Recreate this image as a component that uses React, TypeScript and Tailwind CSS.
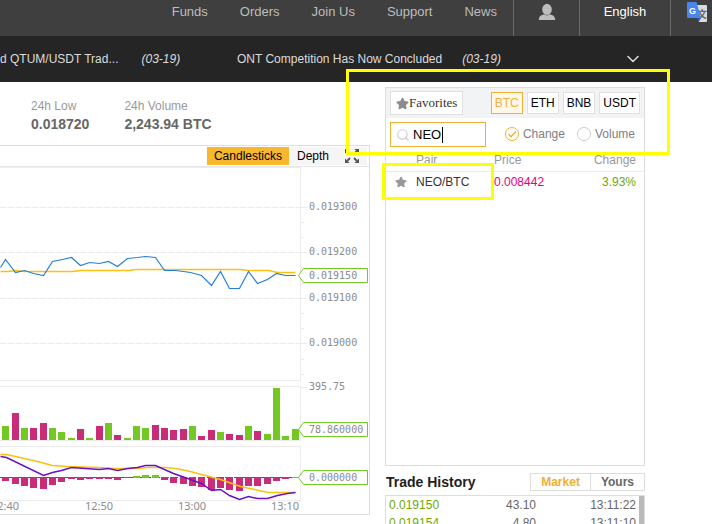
import React, { useState } from 'react';
import { ChevronDown, Search } from 'lucide-react';
import { FaStar } from 'react-icons/fa';

const NAV_LINKS = ['Funds', 'Orders', 'Join Us', 'Support', 'News'];
const QUOTES = ['BTC', 'ETH', 'BNB', 'USDT'];

const PAIRS = [{ pair: 'NEO/BTC', price: '0.008442', change: '3.93%' }];

const TRADES = [
  { price: '0.019150', amount: '43.10', time: '13:11:22' },
  { price: '0.019154', amount: '4.80', time: '13:11:10' },
];

const GREEN = '#73c921';
const MAGENTA = '#c92c78';

// height and direction of every volume bar, left to right
const VOLUME: [number, boolean][] = [
  [14, true], [27, false], [12, true], [12, false], [17, false], [12, true], [8, true], [2, true],
  [11, false], [2, true], [14, false], [17, true], [5, false], [2, true], [14, true], [12, true],
  [15, false], [12, false], [10, false], [11, false], [14, true], [4, false], [10, false], [8, true],
  [6, false], [5, false], [14, true], [9, false], [6, true], [52, true], [4, true], [11, true],
];

// positive values hang below the zero line
const MACD = [
  4, 7, 9, 11, 12, 8, 5, 2, 3, 2, 2, 2, 3, 1, -2, -3,
  -3, 3, 6, 7, 9, 10, 13, 11, 13, 14, 9, 9, 7, 4, 2, 0,
];

const PRICE_LINE =
  '0,100 5,92 15,105 24,103 33,106 43,108 52,94 62,92 71,90 80,98 89,95 99,96 108,94 117,99 127,91 137,90 145,89 155,90 164,103 175,103 183,104 190,105 201,108 211,118 220,104 229,121 239,121 248,104 257,116 267,112 276,106 285,108 295,108';
const MA_LINE =
  '0,104 8,104 15,103 24,104 72,104 80,103 128,103 135,102 240,102 248,103 268,103 277,105 295,105';
const SIGNAL_LINE =
  '0,287 6,287 33,293 52,298 67,299 99,300 115,301 137,301 147,300 165,300 175,301 190,304 201,307 220,312 240,319 268,325 295,325';
const DIF_LINE =
  '0,289 6,290 43,308 52,305 61,303 71,300 99,302 108,301 117,303 127,301 137,300 145,298 155,298 173,306 190,312 201,316 211,323 220,322 229,328 239,332 248,329 257,331 267,331 277,328 287,326 295,325';

const barX = (i: number) => Math.ceil(2 + (i * 28) / 3);

const AXIS_FONT = "font-['DejaVu_Sans_Mono',monospace] text-[10px]";

const PriceTag: React.FC<{ y: number; label: string }> = ({ y, label }) => (
  <g>
    <path
      d={`M298.5 ${y} L303.5 ${y - 7} H367.5 V${y + 7} H303.5 Z`}
      fill="#fff"
      stroke={GREEN}
    />
    <text x={309} y={y + 3.5} fill="#8c8c8c" className={AXIS_FONT}>{label}</text>
  </g>
);

const Chart: React.FC = () => (
  <svg viewBox="0 0 369 347" className="block w-full h-auto" role="img" aria-label="Price chart">
    <g stroke="#ececec" shapeRendering="crispEdges">
      {[0.5, 213.5, 219.5, 273.5, 279.5, 333.5].map(y => (
        <line key={y} x1={0} x2={300} y1={y} y2={y} />
      ))}
      {[40.5, 85.5, 131.5, 176.5].map(y => (
        <line key={y} x1={0} x2={300} y1={y} y2={y} strokeDasharray="7 1" />
      ))}
      {[40.5, 85.5, 131.5, 176.5, 220.5].map(y => (
        <line key={y} x1={300} x2={307} y1={y} y2={y} />
      ))}
      {[55.5, 70.5, 100.5, 116.5, 146.5, 161.5, 192.5, 207.5].map(y => (
        <line key={y} x1={300} x2={304} y1={y} y2={y} />
      ))}
      <line x1={300.5} x2={300.5} y1={0} y2={214} />
      <line x1={300.5} x2={300.5} y1={219} y2={274} />
      <line x1={300.5} x2={300.5} y1={279} y2={334} />
    </g>

    <g fill="#8c8c8c" className={AXIS_FONT}>
      <text x={309} y={43}>0.019300</text>
      <text x={309} y={88}>0.019200</text>
      <text x={309} y={134}>0.019100</text>
      <text x={309} y={179}>0.019000</text>
      <text x={309} y={223}>395.75</text>
    </g>

    <polyline points={MA_LINE} transform="translate(.5 .5)" fill="none" stroke="#fdc010" strokeWidth={1.5} />
    <polyline points={PRICE_LINE} transform="translate(.5 .5)" fill="none" stroke="#2580d4" strokeWidth={1.2} />

    {VOLUME.map(([h, up], i) => (
      <rect key={i} x={barX(i)} y={273 - h} width={7} height={h} fill={up ? GREEN : MAGENTA} />
    ))}

    <line x1={0} x2={292} y1={310.5} y2={310.5} stroke="#555" strokeDasharray="7 2" />
    <line x1={292} x2={299} y1={310.5} y2={310.5} stroke={GREEN} />
    {MACD.map((v, i) => (
      <rect
        key={i}
        x={barX(i)}
        y={v > 0 ? 310 : 311 + v}
        width={7}
        height={Math.abs(v)}
        fill={v > 0 ? MAGENTA : GREEN}
      />
    ))}
    <polyline points={SIGNAL_LINE} transform="translate(.5 .5)" fill="none" stroke="#fdc010" strokeWidth={1.5} />
    <polyline points={DIF_LINE} transform="translate(.5 .5)" fill="none" stroke="#6a10c4" strokeWidth={1.5} />

    <PriceTag y={108.5} label="0.019150" />
    <PriceTag y={262.5} label="78.860000" />
    <PriceTag y={310.5} label="0.000000" />

    <g fill="#8c8c8c" className="font-['Noto_Sans',sans-serif] text-[11px]">
      <text x={-9} y={343}>12:40</text>
      <text x={85} y={343}>12:50</text>
      <text x={178} y={343}>13:00</text>
      <text x={271} y={343}>13:10</text>
    </g>
  </svg>
);

const UserIcon = () => (
  <svg width="18" height="18" viewBox="0 0 18 18" fill="#bdbdbd">
    <ellipse cx="9" cy="6.4" rx="4.8" ry="5.6" />
    <path d="M.8 17 C.8 13 3 12.4 6 11.2 L9 12.6 L12 11.2 C15 12.4 17.2 13 17.2 17 Z" />
  </svg>
);

const TranslateIcon = () => (
  <svg width="20" height="20" viewBox="0 0 20 20">
    <path d="M7 3 H19 A1 1 0 0 1 20 4 V19 A1 1 0 0 1 19 20 H12 Z" fill="#dcdcdc" />
    <text x="10" y="15.5" fill="#5f6a70" className="font-['Noto_Sans_CJK_SC',sans-serif] text-[10px] font-bold">文</text>
    <path d="M10 16 H14 L12 19.5 Z" fill="#2a56c6" />
    <path d="M1 0 H9.5 L14 16 H1 A1 1 0 0 1 0 15 V1 A1 1 0 0 1 1 0 Z" fill="#4a86ea" />
    <text x="2" y="11.5" fill="#fff" className="font-['Liberation_Sans',sans-serif] text-[9px] font-bold">G</text>
  </svg>
);

const ExpandIcon = () => (
  <svg width="14" height="14" viewBox="0 0 14 14" fill="#555" stroke="#555">
    <g strokeWidth="1.8">
      <path d="M2 2 L5 5 M12 2 L9 5 M2 12 L5 9 M12 12 L9 9" />
    </g>
    <path stroke="none" d="M0 0 H4.5 L0 4.5 Z M14 0 V4.5 L9.5 0 Z M0 14 V9.5 L4.5 14 Z M14 14 H9.5 L14 9.5 Z" />
  </svg>
);

const Header: React.FC = () => (
  <header className="flex h-9 shrink-0 justify-end bg-[#3f3f3f] text-[13px] text-[#bdbdbd]">
    <nav className="flex h-6 items-center gap-8 pr-4">
      {NAV_LINKS.map(link => (
        <a key={link} href="#" className="hover:text-white">{link}</a>
      ))}
    </nav>
    <div className="flex w-[66px] justify-center border-l border-[#6a6a6a]">
      <a href="#" aria-label="Account" className="flex h-6 items-center"><UserIcon /></a>
    </div>
    <div className="flex w-[91px] justify-center border-l border-[#6a6a6a]">
      <a href="#" className="flex h-6 items-center text-white">English</a>
    </div>
    <div className="flex w-[42px] border-l border-[#6a6a6a] pl-4">
      <button aria-label="Translate" className="flex h-6 items-center"><TranslateIcon /></button>
    </div>
  </header>
);

const Ticker: React.FC = () => (
  <div className="flex h-[46px] shrink-0 items-center bg-[#252525] text-xs whitespace-nowrap text-[#dcdcdc]">
    <div className="flex w-[237px] gap-[23px]">
      <a href="#">d QTUM/USDT Trad...</a>
      <em>(03-19)</em>
    </div>
    <div className="flex flex-1 gap-5">
      <a href="#">ONT Competition Has Now Concluded</a>
      <em>(03-19)</em>
    </div>
    <button aria-label="More announcements" className="mr-[69px]">
      <ChevronDown size={20} strokeWidth={1.8} />
    </button>
  </div>
);

const Stat: React.FC<{ label: string; value: string }> = ({ label, value }) => (
  <div>
    <p className="text-xs leading-4 text-[#999]">{label}</p>
    <p className="text-sm leading-5 font-bold text-[#666]">{value}</p>
  </div>
);

const MarketPanel: React.FC = () => {
  const [quote, setQuote] = useState('BTC');
  const [query, setQuery] = useState('NEO');
  const [sortBy, setSortBy] = useState('Change');

  return (
    <section className="relative h-[379px] shrink-0 border border-[#dedede]">
      <div className="flex h-[30px] items-center justify-between bg-[#f2f3f4] px-1 text-xs">
        <button className="flex h-6 items-center border border-[#e0e0e0] bg-white px-[5px] font-['Liberation_Serif',serif] text-[13px] text-[#333]">
          <FaStar size={13} color="#8c8c8c" />
          Favorites
        </button>
        <div className="flex gap-1">
          {QUOTES.map(q => (
            <button
              key={q}
              onClick={() => setQuote(q)}
              className={`h-[22px] border px-[3px] ${
                q === quote ? 'border-[#f0b034] bg-[#fff8e6] text-[#efb04a]' : 'border-[#e0e0e0] bg-white text-black'
              }`}
            >
              {q}
            </button>
          ))}
        </div>
      </div>

      <div className="flex h-8 items-start justify-between pt-1 pr-[9px] pl-1">
        <label className="relative flex h-[25px] w-24 items-center border border-[#f0b034] px-[5px]">
          <Search size={14} color="#ccc" strokeWidth={2} className="shrink-0" />
          <input
            aria-label="Search pairs"
            value={query}
            onChange={e => setQuery(e.target.value)}
            className="w-full min-w-0 pl-[3px] text-[13px] text-black caret-transparent outline-none"
          />
          <span className="absolute top-1 left-[51px] h-4 w-px bg-black" />
        </label>
        <div className="flex h-6 items-center gap-3 text-xs text-[#808080]">
          {['Change', 'Volume'].map(option => (
            <label key={option} className="relative flex items-center gap-1">
              <input
                type="radio"
                name="sort"
                checked={sortBy === option}
                onChange={() => setSortBy(option)}
                className="size-[14px] appearance-none rounded-full border border-[#ccc] checked:border-[#f0b034]"
              />
              {sortBy === option && (
                <svg className="absolute left-0" width="14" height="14" viewBox="0 0 14 14" fill="none" stroke="#f0b034" strokeWidth="1.5">
                  <path d="M3.5 7.2 L6 9.7 L10.8 4.6" />
                </svg>
              )}
              {option}
            </label>
          ))}
        </div>
      </div>

      <table className="w-full table-fixed text-xs">
        <thead>
          <tr className="h-[21px] border-b border-[#e3ecf0] text-[#999]">
            <th className="w-[30px]" aria-label="Favorite" />
            <th className="w-[78px] text-left font-normal">Pair</th>
            <th className="text-left font-normal">Price</th>
            <th className="pr-2 text-right font-normal">Change</th>
          </tr>
        </thead>
        <tbody>
          {PAIRS.map(row => (
            <tr key={row.pair} className="h-[22px]">
              <td><FaStar size={12} color="#999" className="ml-[9px]" /></td>
              <td className="text-[#333]">{row.pair}</td>
              <td className="text-[#e5007a]">{row.price}</td>
              <td className="pr-2 text-right text-[#70a800]">{row.change}</td>
            </tr>
          ))}
        </tbody>
      </table>

      {/* highlight frames */}
      <div className="pointer-events-none absolute -top-[19px] -right-[26px] -left-10 h-[86px] border-3 border-[#ffff00]" />
      <div className="pointer-events-none absolute top-[75px] -left-1 h-[37px] w-28 border-3 border-[#ffff00]" />
    </section>
  );
};

const TradeHistory: React.FC = () => (
  <section className="flex min-h-0 flex-1 flex-col">
    <div className="flex h-[29px] shrink-0 items-center justify-between pt-[2px] pl-px">
      <h2 className="text-sm font-bold text-[#222]">Trade History</h2>
      <div className="flex h-[18px] items-center border border-[#dedede] text-xs font-bold">
        <button className="px-[10px] text-[#f0b034]">Market</button>
        <button className="border-l border-[#dedede] px-[10px] text-[#666]">Yours</button>
      </div>
    </div>
    <div className="flex min-h-0 flex-1 overflow-hidden border border-b-0 border-[#dedede]">
      <table className="h-fit flex-1 table-fixed text-xs text-[#666]">
        <tbody>
          {TRADES.map(trade => (
            <tr key={trade.time} className="h-[18px]">
              <td className="w-[80px] pl-[3px] text-[#70a800]">{trade.price}</td>
              <td className="w-[70px] text-right">{trade.amount}</td>
              <td className="pr-[3px] text-right">{trade.time}</td>
            </tr>
          ))}
        </tbody>
      </table>
      <div className="w-[5px] bg-[#bababa]" />
    </div>
  </section>
);

export default function App() {
  return (
    <div className="flex h-screen flex-col overflow-hidden bg-white font-['Liberation_Sans',Arial,sans-serif]">
      <Header />
      <Ticker />
      <main className="flex min-h-0 flex-1 gap-[15px] pr-[67px]">
        <div className="min-w-0 flex-1">
          <div className="flex h-[63px] items-center gap-[35px] pt-4 pb-3 pl-[31px]">
            <Stat label="24h Low" value="0.018720" />
            <Stat label="24h Volume" value="2,243.94 BTC" />
          </div>
          <section className="border border-l-0 border-[#dedede]">
            <div className="flex h-[21px] items-center justify-end border-b border-[#e6e6e6] pr-[2px] text-xs text-black">
              <button className="h-[18px] bg-[#f5b82e] px-[7px]">Candlesticks</button>
              <button className="h-[18px] bg-[#f5f5f5] px-2">Depth</button>
              <button aria-label="Full screen" className="flex h-[18px] items-center bg-[#f5f5f5] px-2">
                <ExpandIcon />
              </button>
            </div>
            <Chart />
          </section>
        </div>
        <div className="flex w-[260px] shrink-0 flex-col pt-[5px]">
          <MarketPanel />
          <TradeHistory />
        </div>
      </main>
    </div>
  );
}
